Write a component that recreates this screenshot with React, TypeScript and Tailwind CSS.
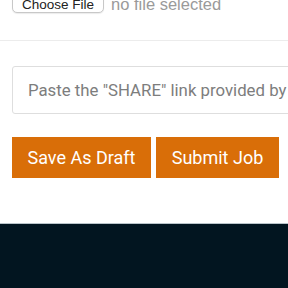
export default function App() {
  return (
    <div className="h-[288px] w-[288px] overflow-hidden bg-white font-['Roboto',sans-serif]">
      <div className="-mt-[7px] flex items-end px-3">
        <button
          type="button"
          className="flex h-[20px] items-end rounded-[5px] border border-[#c8c8c8] bg-white px-[9px] pb-[1px] font-['Liberation_Sans',sans-serif] text-[13.5px] leading-none text-[#222] shadow-[0_1px_1px_rgba(0,0,0,0.08)]"
        >
          Choose File
        </button>
        <span className="mb-[1px] ml-[7px] font-['Liberation_Sans',sans-serif] text-[16.5px] leading-none text-[#9a9a9a]">
          no file selected
        </span>
      </div>

      <div className="mt-[27px] border-t border-[#ececec]" />

      <div className="mt-[25px] pl-3">
        <input
          type="text"
          placeholder='Paste the "SHARE" link provided by your cloud storage'
          className="h-[48px] w-[400px] rounded-[3px] border border-[#dedede] bg-white pl-[15px] text-[16.8px] text-[#333] outline-none placeholder:text-[#7d7d7d]"
        />
      </div>

      <div className="mt-[23px] flex gap-[5px] px-3">
        <button
          type="button"
          className="h-[41px] w-[139px] shrink-0 bg-[#d96e08] text-[18px] text-white"
        >
          Save As Draft
        </button>
        <button
          type="button"
          className="h-[41px] w-[123px] shrink-0 bg-[#d96e08] text-[18px] text-white"
        >
          Submit Job
        </button>
      </div>

      <div className="mt-[45px] h-[80px] border-t border-[#b9c4ca] bg-[#021520]" />
    </div>
  );
}
